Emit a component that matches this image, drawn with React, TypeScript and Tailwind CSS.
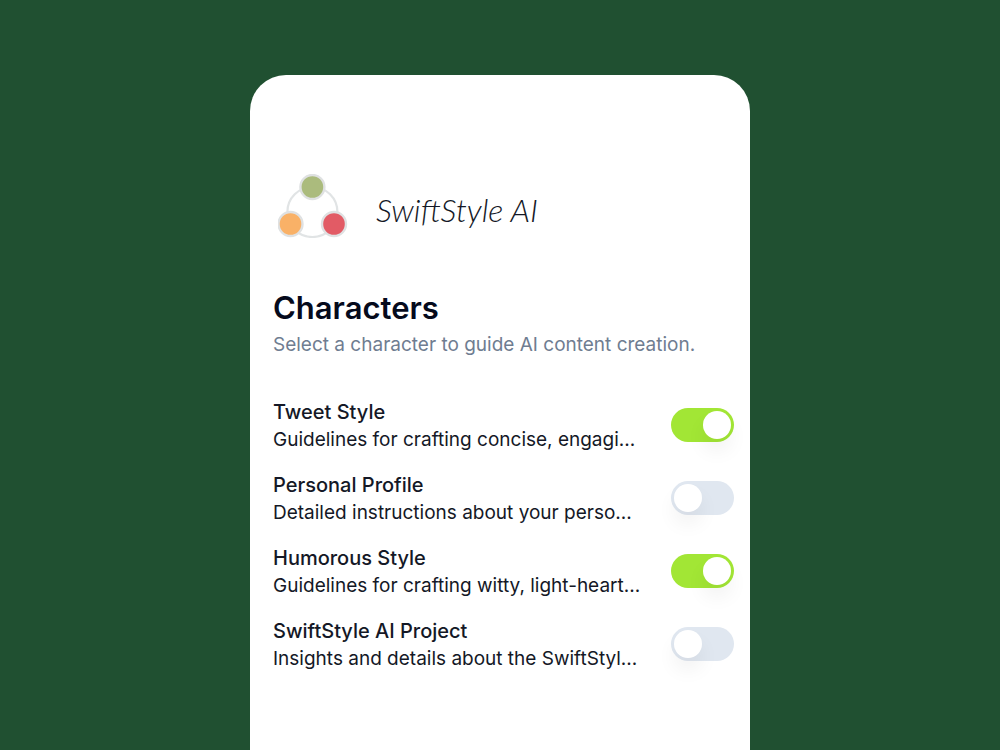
import { useState } from 'react';

type Character = { id: string; name: string; description: string; enabled: boolean };

const initialCharacters: Character[] = [
  { id: 'tweet', name: 'Tweet Style', description: 'Guidelines for crafting concise, engagi...', enabled: true },
  { id: 'profile', name: 'Personal Profile', description: 'Detailed instructions about your perso...', enabled: false },
  { id: 'humor', name: 'Humorous Style', description: 'Guidelines for crafting witty, light-heart...', enabled: true },
  { id: 'project', name: 'SwiftStyle AI Project', description: 'Insights and details about the SwiftStyl...', enabled: false },
];

function Logo() {
  return (
    <svg className="h-16 w-[70px] shrink-0" viewBox="0 0 70 64" fill="none" aria-hidden="true">
      <circle cx="34.4" cy="38" r="25" stroke="#e1e4e5" strokeWidth="2.2" />
      <g stroke="#dfe1e2" strokeWidth="2.4">
        <circle cx="34.4" cy="13" r="12" fill="#abbb7d" />
        <circle cx="12.5" cy="50" r="12" fill="#f9b167" />
        <circle cx="56" cy="50" r="12" fill="#e25b65" />
      </g>
    </svg>
  );
}

function CharacterRow({ character, onToggle }: { character: Character; onToggle: () => void }) {
  return (
    <li>
      <label className="flex cursor-pointer items-center justify-between gap-4">
        <span className="min-w-0 pt-0.5 text-[#141826]">
          <span className="block truncate text-[20px] leading-7 font-medium">{character.name}</span>
          <span className="block truncate text-[19px] leading-7">{character.description}</span>
        </span>
        <input
          type="checkbox"
          checked={character.enabled}
          onChange={onToggle}
          className="peer sr-only"
        />
        <span className="flex h-[34px] w-[63px] shrink-0 items-center rounded-full bg-[#e0e7f0] px-[3px] peer-checked:justify-end peer-checked:bg-[#a2e635] peer-focus-visible:ring-2 peer-focus-visible:ring-slate-500">
          <span className="size-7 rounded-full bg-white shadow-[0_12px_20px_rgba(0,0,0,0.06)]" />
        </span>
      </label>
    </li>
  );
}

export default function App() {
  const [characters, setCharacters] = useState(initialCharacters);
  const toggle = (id: string) =>
    setCharacters((list) => list.map((c) => (c.id === id ? { ...c, enabled: !c.enabled } : c)));

  return (
    <div className="flex min-h-screen justify-center bg-[#205031] pt-[75px] font-['Inter',sans-serif]">
      <main className="w-1/2 min-w-[480px] rounded-t-[36px] bg-white pt-[99px] pr-4 pb-16 pl-[23px]">
        <header className="flex items-center gap-7 pl-[5px]">
          <Logo />
          <span className="pt-2 font-['Lato',sans-serif] text-[32px] leading-10 font-light text-[#141826] italic">
            SwiftStyle AI
          </span>
        </header>
        <section className="mt-[50px]">
          <h1 className="text-[31px] leading-10 font-semibold text-[#050a1c]">Characters</h1>
          <p className="mt-[3px] text-[19px] leading-7 text-[#6f7d91]">Select a character to guide AI content creation.</p>
        </section>
        <ul className="mt-[37px] flex flex-col gap-[15px]">
          {characters.map((c) => (
            <CharacterRow key={c.id} character={c} onToggle={() => toggle(c.id)} />
          ))}
        </ul>
      </main>
    </div>
  );
}
